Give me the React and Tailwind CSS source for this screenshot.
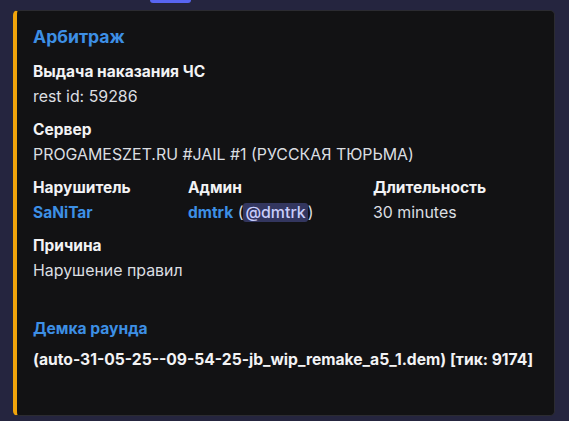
import React from "react";

const Field = ({ name, children, className = "" }) => (
  <div className={className}>
    <div className="leading-[25px] font-bold text-[15.5px] text-[#f2f3f5]">{name}</div>
    <div className="leading-[25px] text-[15.9px] text-[#dbdee1]">{children}</div>
  </div>
);

const App = () => {
  return (
    <div
      className="relative w-[569px] h-[421px] overflow-hidden bg-[#25253f] pt-[10px] pl-[13px]"
      style={{ fontFamily: "Inter, 'Noto Sans', sans-serif" }}
    >
      <div className="absolute top-0 left-[150px] w-[41px] h-[3px] rounded-b-md bg-[#5865f2]" />
      <div className="w-[542px] h-[406px] rounded-[5px] border border-[#2b2b31] border-l-4 border-l-[#f0a30b] bg-[#121214] pt-[13px] pl-[16px] pr-4">
        <div className="leading-[25px] text-[17.6px] font-bold text-[#3d8fe5]">Арбитраж</div>

        <div className="mt-[10px] flex flex-col gap-[8px]">
          <Field name="Выдача наказания ЧС">rest id: 59286</Field>
          <Field name="Сервер">PROGAMESZET.RU #JAIL #1 (РУССКАЯ ТЮРЬМА)</Field>
          <div className="grid grid-cols-[155px_185px_1fr]">
            <Field name="Нарушитель">
              <span className="font-bold text-[15.5px] text-[#3d8fe5]">SaNiTar</span>
            </Field>
            <Field name="Админ">
              <span className="font-bold text-[15.5px] text-[#3d8fe5]">dmtrk</span>{" "}
              (<span className="rounded-[3px] bg-[#33365f] px-[2px] font-medium text-[#c9cdfb]">@dmtrk</span>)
            </Field>
            <Field name="Длительность">30 minutes</Field>
          </div>
          <Field name="Причина">Нарушение правил</Field>
        </div>

        <div className="mt-[33px] leading-[25px] text-[15.6px] font-bold text-[#3d8fe5]">Демка раунда</div>
        <div className="mt-[6px] leading-[25px] text-[15.65px] font-bold text-[#f2f3f5]">
          (auto-31-05-25--09-54-25-jb_wip_remake_a5_1.dem) [тик: 9174]
        </div>
      </div>
    </div>
  );
};

export default App;
